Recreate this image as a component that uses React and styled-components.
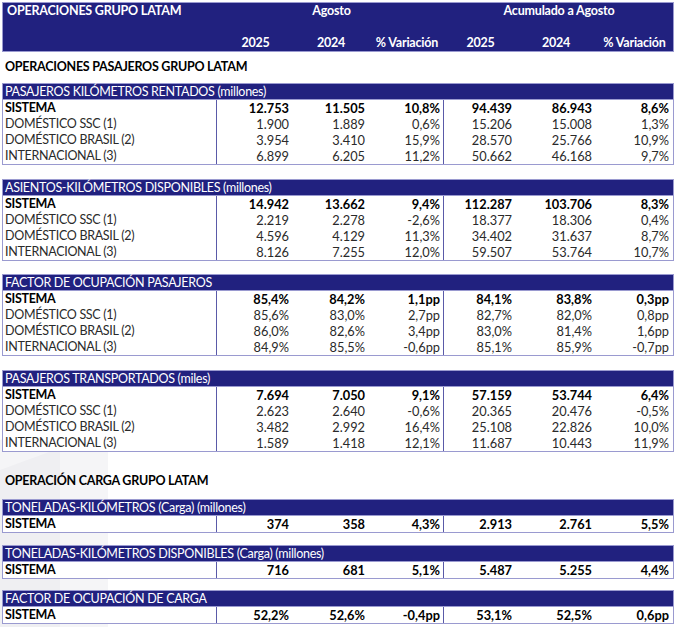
import React from "react";
import styled, { createGlobalStyle } from "styled-components";

const Global = createGlobalStyle`
  html, body { margin: 0; padding: 0; background: #fff; }
  body { font-family: Lato, "Open Sans", sans-serif; color: #000; }
`;

const NAVY = "#21217f";
const LINE = "#9a9ad0";
const DIV = "#5a5aa8";
const COLS = "215px 75px 76px 76px 71px 80px 77px";

const Page = styled.div`
  position: relative;
  width: 678px;
  height: 627px;
  overflow: hidden;
  padding: 2px 0 0 2px;
  box-sizing: border-box;
`;

const Watermark = styled.svg`
  position: absolute;
  left: 0;
  top: 0;
  z-index: 0;
`;

const Content = styled.div`
  position: relative;
  z-index: 1;
  width: 672px;
  display: flex;
  flex-direction: column;
`;

const HeaderBand = styled.div`
  display: grid;
  grid-template-columns: ${COLS};
  grid-template-rows: 16px 16px 16px;
  background: ${NAVY};
  border: 1px solid ${LINE};
  color: #fff;
  font-size: 12.5px;
  font-weight: 700;
  line-height: 16px;
  letter-spacing: -0.2px;
`;

const HeadCell = styled.div`
  grid-column: ${(p) => p.$col || "auto"};
  grid-row: ${(p) => p.$row || "auto"};
  text-align: ${(p) => p.$align || "center"};
  padding-left: ${(p) => (p.$align === "left" ? "4px" : "0")};
  white-space: nowrap;
`;

const SectionTitle = styled.div`
  padding: ${(p) => p.$pad};
  padding-left: 3px;
  font-size: 12.5px;
  font-weight: 700;
  line-height: 16px;
  letter-spacing: -0.25px;
`;

const Tables = styled.div`
  display: flex;
  flex-direction: column;
`;

const Table = styled.div`
  background: #fff;
  border: 1px solid ${LINE};
  margin-top: ${(p) => p.$mt || 0}px;
`;

const TitleBar = styled.div`
  height: 15px;
  line-height: 15px;
  background: ${NAVY};
  color: #fff;
  font-size: 12.5px;
  letter-spacing: -0.3px;
  padding-left: 2px;
  white-space: nowrap;
  border-bottom: 1px solid ${LINE};
`;

const Row = styled.div`
  display: grid;
  grid-template-columns: 214px 75px 76px 76px 71px 80px 76px;
  height: 16px;
  line-height: 16px;
  font-weight: ${(p) => (p.$bold ? 700 : 400)};
  color: ${(p) => (p.$bold ? "#000" : "#2a2a2a")};
`;

const Label = styled.div`
  padding-left: 2px;
  border-right: 1px solid ${DIV};
  white-space: nowrap;
  font-size: 12.5px;
  letter-spacing: -0.3px;
`;

const Num = styled.div`
  text-align: right;
  padding-right: ${(p) => (p.$last ? "2px" : "3px")};
  border-right: ${(p) => (p.$div ? `1px solid ${DIV}` : "none")};
  white-space: nowrap;
  font-size: 12.8px;
`;

const big = [
  {
    title: "PASAJEROS KILÓMETROS RENTADOS (millones)",
    rows: [
      ["SISTEMA", "12.753", "11.505", "10,8%", "94.439", "86.943", "8,6%"],
      ["DOMÉSTICO SSC (1)", "1.900", "1.889", "0,6%", "15.206", "15.008", "1,3%"],
      ["DOMÉSTICO BRASIL (2)", "3.954", "3.410", "15,9%", "28.570", "25.766", "10,9%"],
      ["INTERNACIONAL (3)", "6.899", "6.205", "11,2%", "50.662", "46.168", "9,7%"],
    ],
  },
  {
    title: "ASIENTOS-KILÓMETROS DISPONIBLES (millones)",
    rows: [
      ["SISTEMA", "14.942", "13.662", "9,4%", "112.287", "103.706", "8,3%"],
      ["DOMÉSTICO SSC (1)", "2.219", "2.278", "-2,6%", "18.377", "18.306", "0,4%"],
      ["DOMÉSTICO BRASIL (2)", "4.596", "4.129", "11,3%", "34.402", "31.637", "8,7%"],
      ["INTERNACIONAL (3)", "8.126", "7.255", "12,0%", "59.507", "53.764", "10,7%"],
    ],
  },
  {
    title: "FACTOR DE OCUPACIÓN PASAJEROS",
    rows: [
      ["SISTEMA", "85,4%", "84,2%", "1,1pp", "84,1%", "83,8%", "0,3pp"],
      ["DOMÉSTICO SSC (1)", "85,6%", "83,0%", "2,7pp", "82,7%", "82,0%", "0,8pp"],
      ["DOMÉSTICO BRASIL (2)", "86,0%", "82,6%", "3,4pp", "83,0%", "81,4%", "1,6pp"],
      ["INTERNACIONAL (3)", "84,9%", "85,5%", "-0,6pp", "85,1%", "85,9%", "-0,7pp"],
    ],
  },
  {
    title: "PASAJEROS TRANSPORTADOS (miles)",
    rows: [
      ["SISTEMA", "7.694", "7.050", "9,1%", "57.159", "53.744", "6,4%"],
      ["DOMÉSTICO SSC (1)", "2.623", "2.640", "-0,6%", "20.365", "20.476", "-0,5%"],
      ["DOMÉSTICO BRASIL (2)", "3.482", "2.992", "16,4%", "25.108", "22.826", "10,0%"],
      ["INTERNACIONAL (3)", "1.589", "1.418", "12,1%", "11.687", "10.443", "11,9%"],
    ],
  },
];

const cargo = [
  {
    title: "TONELADAS-KILÓMETROS (Carga) (millones)",
    rows: [["SISTEMA", "374", "358", "4,3%", "2.913", "2.761", "5,5%"]],
  },
  {
    title: "TONELADAS-KILÓMETROS DISPONIBLES (Carga) (millones)",
    rows: [["SISTEMA", "716", "681", "5,1%", "5.487", "5.255", "4,4%"]],
  },
  {
    title: "FACTOR DE OCUPACIÓN DE CARGA",
    rows: [["SISTEMA", "52,2%", "52,6%", "-0,4pp", "53,1%", "52,5%", "0,6pp"]],
  },
];

function DataTable({ title, rows, mt }) {
  return (
    <Table $mt={mt}>
      <TitleBar>{title}</TitleBar>
      {rows.map((r, i) => (
        <Row key={i} $bold={r[0] === "SISTEMA"}>
          <Label>{r[0]}</Label>
          {r.slice(1).map((v, j) => (
            <Num key={j} $div={j === 2} $last={j === 5}>
              {v}
            </Num>
          ))}
        </Row>
      ))}
    </Table>
  );
}

const bigGaps = [0, 14, 13, 14];
const cargoGaps = [0, 12, 11];

export default function App() {
  return (
    <>
      <Global />
      <Page>
        <Watermark width="678" height="627" viewBox="0 0 678 627">
          <polygon points="0,440 108,398 108,627 0,627" fill="#f5f5f7" />
          <polygon points="0,470 60,448 60,627 0,627" fill="#efeff2" />
        </Watermark>
        <Content>
          <HeaderBand>
            <HeadCell $col="1" $row="1" $align="left">
              OPERACIONES GRUPO LATAM
            </HeadCell>
            <HeadCell $col="2 / 5" $row="1">Agosto</HeadCell>
            <HeadCell $col="5 / 8" $row="1">Acumulado a Agosto</HeadCell>
            <HeadCell $col="2" $row="3">2025</HeadCell>
            <HeadCell $col="3" $row="3">2024</HeadCell>
            <HeadCell $col="4" $row="3">% Variación</HeadCell>
            <HeadCell $col="5" $row="3">2025</HeadCell>
            <HeadCell $col="6" $row="3">2024</HeadCell>
            <HeadCell $col="7" $row="3">% Variación</HeadCell>
          </HeaderBand>
          <SectionTitle $pad="7px 0 8px">OPERACIONES PASAJEROS GRUPO LATAM</SectionTitle>
          <Tables>
            {big.map((t, i) => (
              <DataTable key={i} {...t} mt={bigGaps[i]} />
            ))}
          </Tables>
          <SectionTitle $pad="21px 0 10px">OPERACIÓN CARGA GRUPO LATAM</SectionTitle>
          <Tables>
            {cargo.map((t, i) => (
              <DataTable key={i} {...t} mt={cargoGaps[i]} />
            ))}
          </Tables>
        </Content>
      </Page>
    </>
  );
}
